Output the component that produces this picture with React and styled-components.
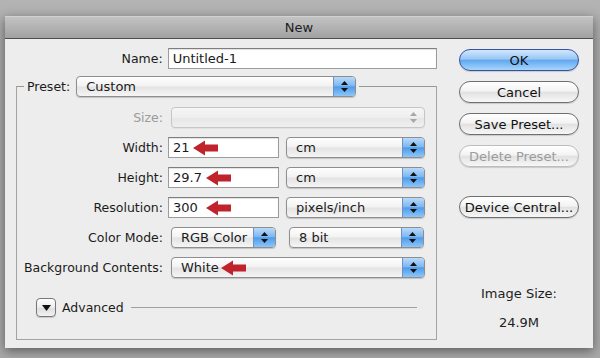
import styled, { createGlobalStyle } from "styled-components";

const GlobalStyle = createGlobalStyle`
  html, body {
    margin: 0;
    padding: 0;
    background: #a9a9a9;
  }
  body {
    font-family: "DejaVu Sans", "Lucida Grande", sans-serif;
    font-size: 12.5px;
    color: #1b1b1b;
  }
`;

const Stage = styled.div`
  width: 600px;
  height: 358px;
  box-sizing: border-box;
  padding: 16px 0 0 5px;
  background: linear-gradient(#b4b4b4, #a8a8a8 40px, #a8a8a8);
  overflow: hidden;
`;

const Window = styled.div`
  width: 588px;
  height: 332px;
  background: #ededed;
  box-shadow: 0 3px 10px rgba(0, 0, 0, 0.45);
  display: flex;
  flex-direction: column;
`;

const TitleBar = styled.div`
  height: 21px;
  border-top: 1px solid #d2d2d2;
  border-bottom: 1px solid #4f4f4f;
  background: linear-gradient(#c3c3c3, #a1a1a1);
  display: flex;
  align-items: center;
  justify-content: center;
  font-size: 13px;
  color: #1d1d1d;
`;

const Body = styled.div`
  flex: 1;
  display: flex;
`;

const MainColumn = styled.div`
  width: 432px;
  display: flex;
  flex-direction: column;
  padding-top: 9px;
`;

const SideColumn = styled.div`
  flex: 1;
  display: flex;
  flex-direction: column;
  padding: 10px 0 0 22px;
`;

const Row = styled.div`
  display: flex;
  align-items: center;
  height: 21px;
`;

const Label = styled.span`
  width: ${(p) => p.$w}px;
  text-align: right;
  padding-right: 5px;
  color: ${(p) => (p.$dim ? "#9b9b9b" : "#1b1b1b")};
  white-space: nowrap;
`;

const FieldWrap = styled.div`
  position: relative;
  width: ${(p) => p.$w}px;
  height: 21px;
`;

const Field = styled.div`
  box-sizing: border-box;
  height: 100%;
  border: 1px solid #9c9c9c;
  border-top-color: #7e7e7e;
  background: #fff;
  box-shadow: inset 0 1px 1px rgba(0, 0, 0, 0.12);
  padding-left: 4px;
  display: flex;
  align-items: center;
  font-size: 13px;
`;

const ArrowMark = styled.svg`
  position: absolute;
  top: 3px;
  left: ${(p) => p.$x}px;
`;

const PopupBox = styled.div`
  position: relative;
  box-sizing: border-box;
  width: ${(p) => p.$w}px;
  height: 21px;
  margin-left: ${(p) => p.$ml || 0}px;
  border: 1px solid ${(p) => (p.$disabled ? "#c6c6c6" : "#8e8e8e")};
  border-radius: 4px;
  background: ${(p) =>
    p.$disabled
      ? "linear-gradient(#f6f6f6, #eeeeee 50%, #e6e6e6 51%, #efefef)"
      : "linear-gradient(#fefefe, #f2f2f2 48%, #e3e3e3 52%, #f5f5f5)"};
  box-shadow: 0 1px 1px rgba(0, 0, 0, ${(p) => (p.$disabled ? 0.05 : 0.18)});
  display: flex;
  align-items: stretch;
  overflow: hidden;
`;

const PopupText = styled.span`
  flex: 1;
  display: flex;
  align-items: center;
  padding-left: 9px;
  font-size: 13px;
  white-space: nowrap;
`;

const Stepper = styled.span`
  width: 21px;
  display: flex;
  flex-direction: column;
  align-items: center;
  justify-content: center;
  gap: 3px;
  border-left: 1px solid ${(p) => (p.$disabled ? "transparent" : "#6f92c4")};
  background: ${(p) =>
    p.$disabled
      ? "transparent"
      : "linear-gradient(#b8dafb, #7fb8f1 45%, #4f9ceb 52%, #8cc6fa)"};
`;

const Group = styled.fieldset`
  margin: 7px 0 0 11px;
  width: 421px;
  box-sizing: border-box;
  height: 264px;
  padding: 0;
  border: 1px solid #a3a3a3;
  border-top-color: #979797;
  display: flex;
  flex-direction: column;
`;

const Legend = styled.legend`
  margin-left: 7px;
  padding: 0 3px;
  display: flex;
  align-items: center;
  gap: 6px;
`;

const GroupRows = styled.div`
  display: flex;
  flex-direction: column;
  gap: 9px;
  padding-top: 10px;
`;

const AdvancedRow = styled.div`
  display: flex;
  align-items: center;
  gap: 6px;
  margin-top: 20px;
  padding: 0 19px;
`;

const Disclosure = styled.span`
  box-sizing: border-box;
  width: 20px;
  height: 19px;
  border: 1px solid #777;
  border-radius: 4px;
  background: linear-gradient(#ffffff, #ececec 50%, #dcdcdc 52%, #f3f3f3);
  box-shadow: 0 1px 1px rgba(0, 0, 0, 0.15);
  display: flex;
  align-items: center;
  justify-content: center;
`;

const Rule = styled.span`
  flex: 1;
  height: 1px;
  margin-left: 1px;
  background: #9f9f9f;
`;

const Button = styled.div`
  box-sizing: border-box;
  width: 120px;
  height: 22px;
  margin-bottom: ${(p) => p.$mb}px;
  border-radius: 11px;
  border: 1px solid
    ${(p) => (p.$primary ? "#3651a0" : p.$disabled ? "#bdbdbd" : "#6f6f6f")};
  background: ${(p) =>
    p.$primary
      ? "linear-gradient(#d2e7fc, #98c7f5 45%, #62a8ef 52%, #a6d5fc)"
      : "linear-gradient(#ffffff, #f3f3f3 45%, #e2e2e2 52%, #f7f7f7)"};
  box-shadow: 0 1px 1px rgba(0, 0, 0, 0.15);
  display: flex;
  align-items: center;
  justify-content: center;
  font-size: 13px;
  color: ${(p) => (p.$disabled ? "#9c9c9c" : "#111")};
`;

const SizeInfo = styled.div`
  width: 120px;
  margin-top: 68px;
  display: flex;
  flex-direction: column;
  align-items: center;
  gap: 14px;
  font-size: 13px;
  color: #1d1d1d;
`;

function StepArrows({ color }) {
  return (
    <>
      <svg width="7" height="4" viewBox="0 0 7 4">
        <polygon points="3.5,0 7,4 0,4" fill={color} />
      </svg>
      <svg width="7" height="4" viewBox="0 0 7 4">
        <polygon points="0,0 7,0 3.5,4" fill={color} />
      </svg>
    </>
  );
}

function Popup({ w, ml, value, disabled }) {
  return (
    <PopupBox $w={w} $ml={ml} $disabled={disabled}>
      <PopupText>{value}</PopupText>
      <Stepper $disabled={disabled}>
        <StepArrows color={disabled ? "#a8a8a8" : "#111"} />
      </Stepper>
    </PopupBox>
  );
}

function RedArrow({ x }) {
  return (
    <ArrowMark $x={x} width="26" height="16" viewBox="0 0 26 16">
      <polygon
        points="0,8 12,0.5 12,4.5 25,4.5 25,11.5 12,11.5 12,15.5"
        fill="#c0232b"
      />
    </ArrowMark>
  );
}

function TextField({ w, value, arrow }) {
  return (
    <FieldWrap $w={w}>
      <Field>{value}</Field>
      {arrow != null && <RedArrow x={arrow} />}
    </FieldWrap>
  );
}

const rows = [
  { label: "Width:", value: "21", arrow: 25, unit: "cm" },
  { label: "Height:", value: "29.7", arrow: 38, unit: "cm" },
  { label: "Resolution:", value: "300", arrow: 38, unit: "pixels/inch" },
];

export default function App() {
  return (
    <>
      <GlobalStyle />
      <Stage>
        <Window>
          <TitleBar>New</TitleBar>
          <Body>
            <MainColumn>
              <Row>
                <Label $w={158}>Name:</Label>
                <TextField w={270} value="Untitled-1" />
              </Row>
              <Group>
                <Legend>
                  <span>Preset:</span>
                  <Popup w={280} value="Custom" />
                </Legend>
                <GroupRows>
                  <Row>
                    <Label $w={146} $dim>
                      Size:
                    </Label>
                    <Popup w={254} ml={3} value="" disabled />
                  </Row>
                  {rows.map((r) => (
                    <Row key={r.label}>
                      <Label $w={146}>{r.label}</Label>
                      <TextField w={111} value={r.value} arrow={r.arrow} />
                      <Popup w={139} ml={7} value={r.unit} />
                    </Row>
                  ))}
                  <Row>
                    <Label $w={146}>Color Mode:</Label>
                    <Popup w={105} ml={3} value="RGB Color" />
                    <Popup w={135} ml={13} value="8 bit" />
                  </Row>
                  <Row>
                    <Label $w={146}>Background Contents:</Label>
                    <FieldWrap $w={257}>
                      <Popup w={254} ml={3} value="White" />
                      <RedArrow x={53} />
                    </FieldWrap>
                  </Row>
                </GroupRows>
                <AdvancedRow>
                  <Disclosure>
                    <svg width="9" height="6" viewBox="0 0 9 6">
                      <polygon points="0,0 9,0 4.5,6" fill="#111" />
                    </svg>
                  </Disclosure>
                  <span>Advanced</span>
                  <Rule />
                </AdvancedRow>
              </Group>
            </MainColumn>
            <SideColumn>
              <Button $primary $mb={10}>OK</Button>
              <Button $mb={10}>Cancel</Button>
              <Button $mb={10}>Save Preset...</Button>
              <Button $disabled $mb={29}>Delete Preset...</Button>
              <Button $mb={0}>Device Central...</Button>
              <SizeInfo>
                <span>Image Size:</span>
                <span>24.9M</span>
              </SizeInfo>
            </SideColumn>
          </Body>
        </Window>
      </Stage>
    </>
  );
}
